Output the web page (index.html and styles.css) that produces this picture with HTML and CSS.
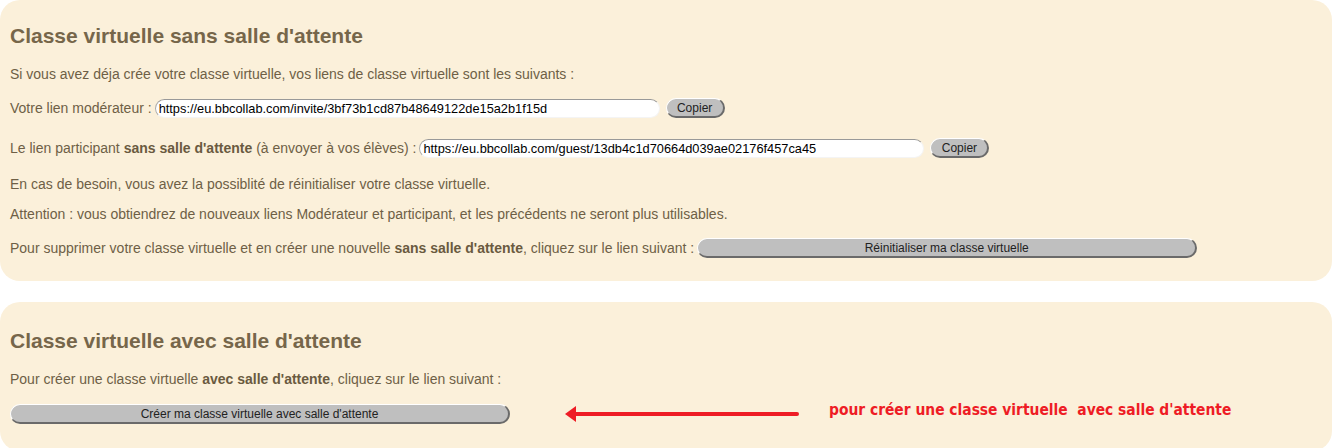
FILE: index.html
```html
<!DOCTYPE html>
<html lang="fr">
<head>
    <meta charset="UTF-8">
    <meta name="viewport" content="width=device-width, initial-scale=1.0">
    <title>Classe virtuelle</title>
    <link rel="stylesheet" href="styles.css">
</head>
<body>
    <!-- Classe sans salle d'attente -->
    <div class="panel panel-first">
        <h2>Classe virtuelle sans salle d'attente</h2>
        <p>Si vous avez déja crée votre classe virtuelle, vos liens de classe virtuelle sont les suivants :</p>
        <div class="row row-input">
            <span>Votre lien modérateur :</span>
            <input type="text" class="link" value="https://eu.bbcollab.com/invite/3bf73b1cd87b48649122de15a2b1f15d" readonly>
            <button class="btn btn-copy">Copier</button>
        </div>
        <div class="row row-input">
            <span>Le lien participant <b>sans salle d'attente</b> (à envoyer à vos élèves) :</span>
            <input type="text" class="link" value="https://eu.bbcollab.com/guest/13db4c1d70664d039ae02176f457ca45" readonly>
            <button class="btn btn-copy">Copier</button>
        </div>
        <p>En cas de besoin, vous avez la possiblité de réinitialiser votre classe virtuelle.</p>
        <p>Attention : vous obtiendrez de nouveaux liens Modérateur et participant, et les précédents ne seront plus utilisables.</p>
        <div class="row row-last">
            <span>Pour supprimer votre classe virtuelle et en créer une nouvelle <b>sans salle d'attente</b>, cliquez sur le lien suivant :</span>
            <button class="btn btn-wide">Réinitialiser ma classe virtuelle</button>
        </div>
    </div>

    <!-- Classe avec salle d'attente -->
    <div class="panel panel-second">
        <h2>Classe virtuelle avec salle d'attente</h2>
        <p>Pour créer une classe virtuelle <b>avec salle d'attente</b>, cliquez sur le lien suivant :</p>
        <div class="row row-create">
            <button class="btn btn-wide">Créer ma classe virtuelle avec salle d'attente</button>
            <svg class="arrow" width="234" height="18" viewBox="0 0 234 18">
                <path d="M232 9 L11 9" stroke="#ee1c25" stroke-width="4" stroke-linecap="round"/>
                <polygon points="0,9 11,1 11,17" fill="#ee1c25"/>
            </svg>
            <span class="hint">pour créer une classe virtuelle&nbsp; avec salle d'attente</span>
        </div>
    </div>
</body>
</html>
```

FILE: styles.css
```css
* {
    margin: 0;
    padding: 0;
    box-sizing: border-box;
}

body {
    font-family: "Liberation Sans", Arial, sans-serif;
    font-size: 14px;
    color: #6e5f46;
    background-color: #fff;
}

.panel {
    background-color: #fbf0da;
    border-radius: 20px;
    padding: 0 10px;
}

.panel-first {
    padding-top: 24px;
    padding-bottom: 21px;
    margin-bottom: 21px;
}

.panel-second {
    padding-top: 27px;
    padding-bottom: 24px;
}

h2 {
    font-size: 21px;
    line-height: 24px;
    font-weight: bold;
    color: #76664a;
    margin-bottom: 18px;
}

p {
    line-height: 16px;
    margin-bottom: 14px;
}

b {
    color: #6a5a40;
}

.row {
    display: flex;
    align-items: center;
    height: 24px;
}

.row-input {
    margin-bottom: 16px;
}

.row-input span,
.row-last span {
    margin-right: 3px;
}

.link {
    width: 505px;
    height: 19px;
    padding: 0 3px;
    font-family: "Liberation Sans", Arial, sans-serif;
    font-size: 12.8px;
    color: #000;
    background-color: #fff;
    border: 1px solid;
    border-color: #999 #f4f4f4 #f4f4f4 #aaa;
    border-radius: 10px;
    margin-right: 6px;
}

.btn {
    height: 20px;
    font-family: "Liberation Sans", Arial, sans-serif;
    font-size: 12px;
    color: #222;
    background-color: #bfbfbf;
    border-style: solid;
    border-width: 1.5px 2px 2px 1.5px;
    border-color: #fff #6a6a6a #6a6a6a #fff;
    border-radius: 10px;
    cursor: pointer;
}

.btn-copy {
    width: 59px;
}

.btn-wide {
    width: 500px;
}

.row-create {
    height: 26px;
}

.arrow {
    margin-left: 55px;
    margin-top: -1px;
}

.hint {
    margin-left: 30px;
    margin-top: -8px;
    font-family: "Liberation Sans Narrow", "DejaVu Sans Condensed", sans-serif;
    font-size: 15.4px;
    font-weight: bold;
    color: #ee1c25;
}
```
